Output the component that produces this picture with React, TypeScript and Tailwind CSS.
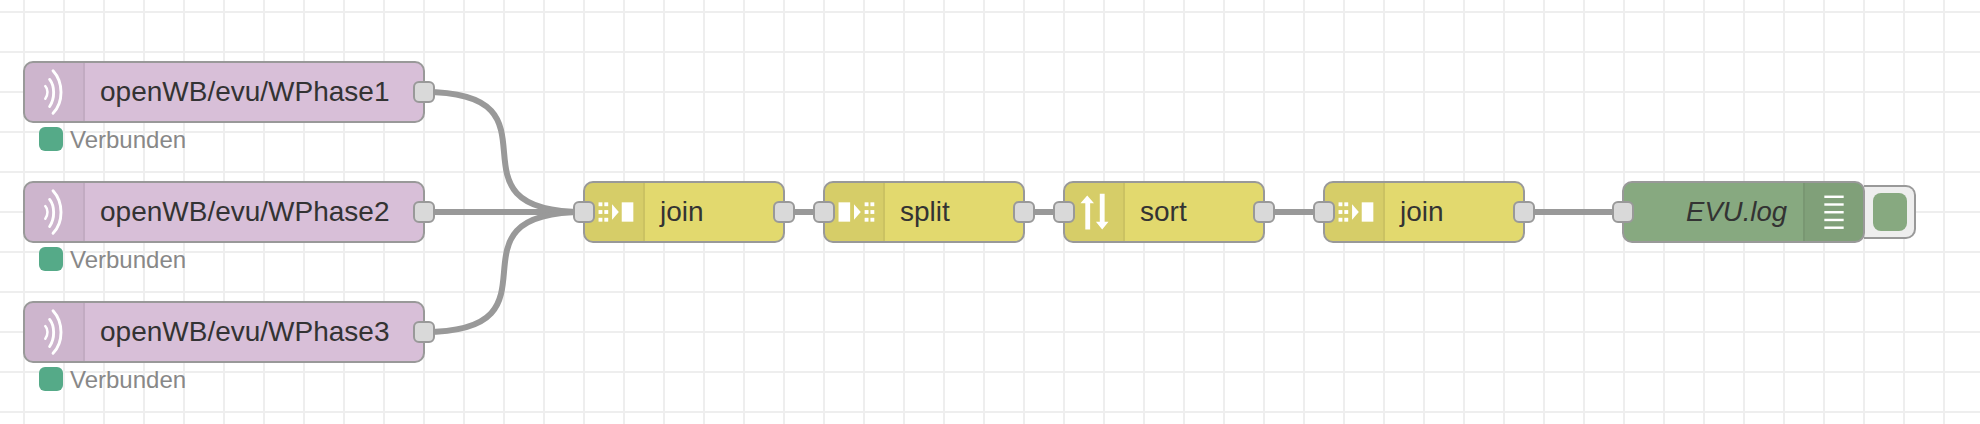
const fontStack = "font-['Liberation_Sans',Arial,sans-serif]";

function Port({ side }: { side: 'left' | 'right' }) {
  return (
    <span
      className={`absolute top-[18px] z-10 w-[22px] h-[22px] rounded-[6px] border-2 border-[#999999] bg-[#d9d9d9] ${
        side === 'left' ? 'left-[-12px]' : 'right-[-12px]'
      }`}
    />
  );
}

function MqttIcon() {
  return (
    <svg width="60" height="60" viewBox="0 0 60 60" fill="none" stroke="#ffffff" strokeWidth="3" strokeLinecap="round">
      <path d="M21 24 C 24 27 24 33 21 37" strokeWidth="2.6" />
      <path d="M25.5 17 C 31 24 31 37 25.5 45" />
      <path d="M29 8 C 40 20 40 41 29 52" />
    </svg>
  );
}

function JoinIcon() {
  return (
    <svg width="60" height="60" viewBox="0 0 60 60" fill="#ffffff">
      {[20, 28, 36].map((y) => (
        <g key={y}>
          <rect x="14" y={y} width="4" height="4" />
          <rect x="20" y={y} width="4" height="4" />
        </g>
      ))}
      <path d="M28 22 L35 30 L28 38 Z" />
      <rect x="38" y="20" width="12" height="20" />
    </svg>
  );
}

function SplitIcon() {
  return (
    <svg width="60" height="60" viewBox="0 0 60 60" fill="#ffffff">
      <rect x="14" y="20" width="12" height="20" />
      <path d="M30 22 L37 30 L30 38 Z" />
      {[20, 28, 36].map((y) => (
        <g key={y}>
          <rect x="41" y={y} width="4" height="4" />
          <rect x="47" y={y} width="4" height="4" />
        </g>
      ))}
    </svg>
  );
}

function SortIcon() {
  return (
    <svg width="60" height="60" viewBox="0 0 60 60" fill="#ffffff">
      <path d="M23 13 L30 21 L26 21 L26 48 L21 48 L21 21 L16 21 Z" />
      <path d="M36 11 L41 11 L41 40 L45 40 L38.5 48 L32 40 L36 40 Z" />
    </svg>
  );
}

function ListIcon() {
  return (
    <svg width="60" height="60" viewBox="0 0 60 60" fill="#ffffff">
      {[13, 21, 29, 37, 45].map((y) => (
        <rect key={y} x="20" y={y} width="20" height="2.5" />
      ))}
    </svg>
  );
}

function FlowNode({ margin, icon, label }: { margin: string; icon: React.ReactNode; label: string }) {
  return (
    <div className={`relative h-[62px] w-[202px] shrink-0 rounded-[10px] border-2 border-[#999999] bg-[#e2d96e] ${margin}`}>
      <div className="flex h-full items-center overflow-hidden rounded-[8px]">
        <div className="flex h-full w-[60px] shrink-0 items-center justify-center bg-black/5 border-r-2 border-black/5">
          {icon}
        </div>
        <span className="pl-[15px] whitespace-nowrap text-[28px] leading-none text-[#333333]">{label}</span>
      </div>
      <Port side="left" />
      <Port side="right" />
    </div>
  );
}

function MqttNode({ label }: { label: string }) {
  return (
    <div className="h-[120px]">
      <div className="relative w-[402px] h-[62px] rounded-[10px] border-2 border-[#999999] bg-[#d8bfd8]">
        <div className="flex h-full items-center overflow-hidden rounded-[8px]">
          <div className="flex h-full w-[60px] shrink-0 items-center justify-center bg-black/5 border-r-2 border-black/5">
            <MqttIcon />
          </div>
          <span className="pl-[15px] whitespace-nowrap text-[28px] leading-none text-[#333333]">{label}</span>
        </div>
        <Port side="right" />
      </div>
      <div className="mt-[3px] ml-[16px] flex items-center gap-[7px]">
        <span className="h-[24px] w-[24px] rounded-[6px] bg-[#55aa88]" />
        <span className="pt-[2px] text-[24px] leading-none text-[#888888]">Verbunden</span>
      </div>
    </div>
  );
}

export default function App() {
  return (
    <div
      className={`relative flex w-[1980px] h-[424px] overflow-hidden bg-white bg-[linear-gradient(to_right,#eeeeee_2px,transparent_2px),linear-gradient(to_bottom,#eeeeee_2px,transparent_2px)] bg-[size:40px_40px] bg-[position:23px_11px] pl-[23px] pt-[61px] ${fontStack}`}
    >
      {/* wires sit under the nodes */}
      <svg className="absolute inset-0" width="1980" height="424" fill="none" stroke="#999999" strokeWidth="6">
        <path d="M424 92 C 574 92 434 212 584 212" />
        <path d="M424 212 L 584 212" />
        <path d="M424 332 C 574 332 434 212 584 212" />
        <path d="M784 212 L 824 212" />
        <path d="M1024 212 L 1064 212" />
        <path d="M1264 212 L 1324 212" />
        <path d="M1524 212 L 1623 212" />
      </svg>

      <div className="relative flex flex-col">
        <MqttNode label="openWB/evu/WPhase1" />
        <MqttNode label="openWB/evu/WPhase2" />
        <MqttNode label="openWB/evu/WPhase3" />
      </div>

      <div className="relative ml-[158px] mt-[120px] flex h-[62px] items-center">
        <FlowNode margin="" icon={<JoinIcon />} label="join" />
        <FlowNode margin="ml-[38px]" icon={<SplitIcon />} label="split" />
        <FlowNode margin="ml-[38px]" icon={<SortIcon />} label="sort" />
        <FlowNode margin="ml-[58px]" icon={<JoinIcon />} label="join" />

        {/* debug node with its toggle button */}
        <div className="relative z-10 ml-[97px] h-[62px] w-[243px] shrink-0 rounded-[10px] border-2 border-[#999999] bg-[#87a980]">
          <div className="flex h-full items-center justify-end overflow-hidden rounded-[8px]">
            <span className="whitespace-nowrap pr-[16px] text-[27.5px] italic leading-none text-[#333333]">EVU.log</span>
            <div className="flex h-full w-[60px] shrink-0 items-center justify-center bg-black/5 border-l-2 border-black/5">
              <ListIcon />
            </div>
          </div>
          <Port side="left" />
        </div>
        <div className="ml-[-1px] flex h-[54px] w-[52px] shrink-0 items-center justify-end rounded-r-[10px] border-2 border-l-0 border-[#999999] bg-[#eeeeee] pr-[7px]">
          <span className="h-[38px] w-[34px] rounded-[8px] bg-[#87a980]" />
        </div>
      </div>
    </div>
  );
}
